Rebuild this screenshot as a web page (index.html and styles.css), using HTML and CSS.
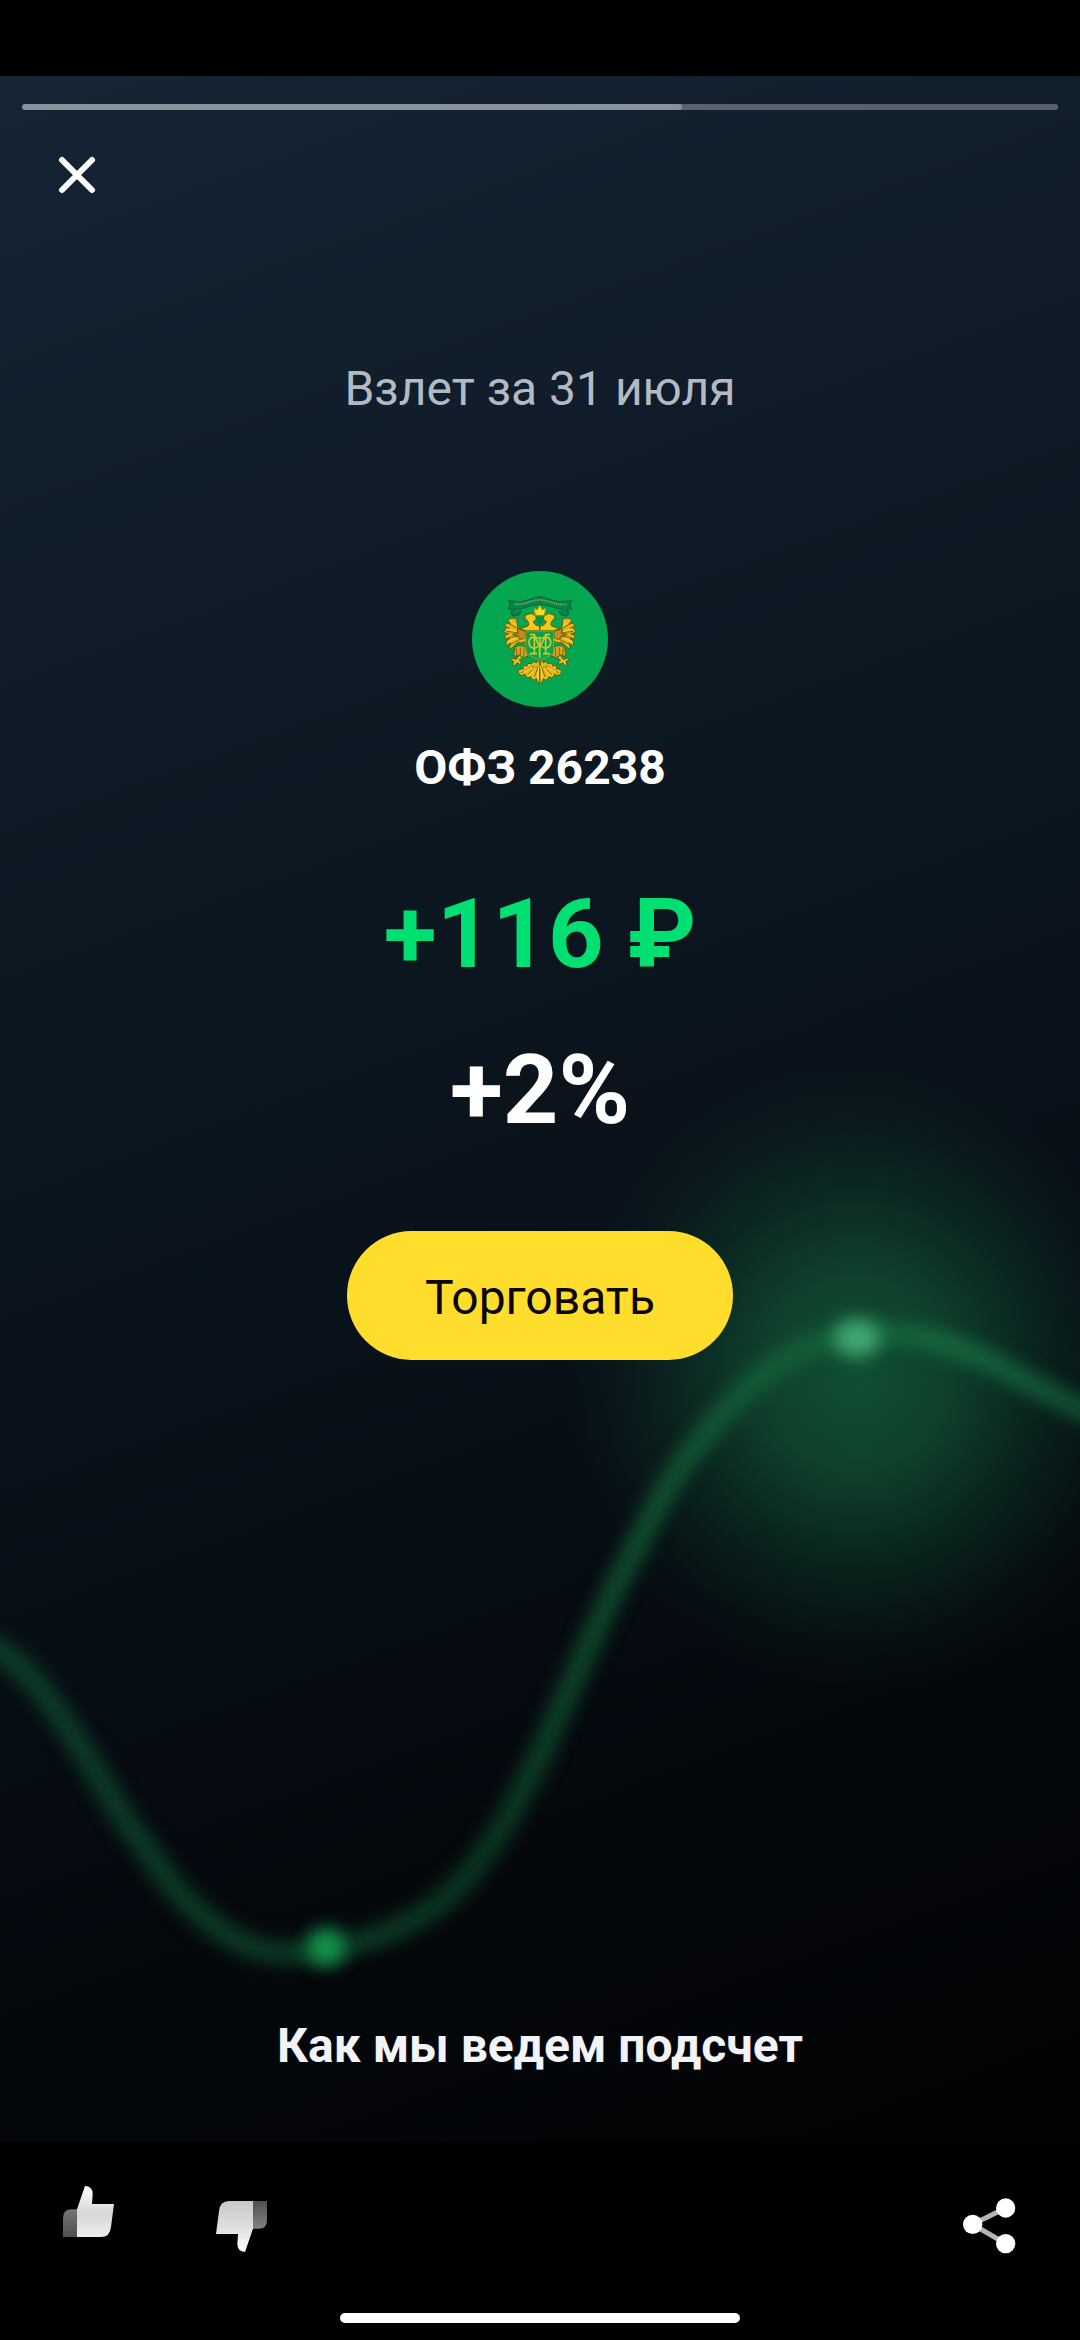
FILE: index.html
```html
<!DOCTYPE html>
<html lang="ru">
<head>
<meta charset="utf-8">
<meta name="viewport" content="width=device-width, initial-scale=1">
<title>Взлет за 31 июля</title>
<link rel="stylesheet" href="styles.css">
</head>
<body>
<main class="story">
  <svg class="backdrop" viewBox="0 0 1080 2066" preserveAspectRatio="none" aria-hidden="true">
    <defs>
      <radialGradient id="glow">
        <stop offset="0" stop-color="#188048" stop-opacity=".56"/>
        <stop offset=".3" stop-color="#188048" stop-opacity=".45"/>
        <stop offset=".6" stop-color="#188048" stop-opacity=".2"/>
        <stop offset=".85" stop-color="#188048" stop-opacity=".05"/>
        <stop offset="1" stop-color="#188048" stop-opacity="0"/>
      </radialGradient>
      <linearGradient id="line" x1="0" y1="0" x2="1080" y2="0" gradientUnits="userSpaceOnUse">
        <stop offset="0" stop-color="#0c3b26"/>
        <stop offset=".45" stop-color="#09331f"/>
        <stop offset=".7" stop-color="#135a34"/>
        <stop offset=".88" stop-color="#15643b"/>
        <stop offset="1" stop-color="#0f4c2e"/>
      </linearGradient>
      <filter id="soft" x="-10%" y="-10%" width="120%" height="120%" color-interpolation-filters="sRGB"><feGaussianBlur stdDeviation="8"/></filter>
      <filter id="dot" x="-100%" y="-100%" width="300%" height="300%" color-interpolation-filters="sRGB"><feGaussianBlur stdDeviation="9"/></filter>
    </defs>
    <ellipse cx="857" cy="1300" rx="295" ry="315" fill="url(#glow)"/>
    <path d="M-40 1555C-26 1560-14 1566 0 1575C36 1599 62 1641 89 1685C108 1716 124 1745 143 1768C161 1794 176 1817 196 1834C220 1857 250 1877 286 1877C318 1877 350 1870 375 1861C402 1852 426 1839 446 1821C468 1802 484 1780 500 1754C524 1714 542 1676 560 1634C585 1577 602 1536 627 1488C646 1451 660 1421 677 1396C704 1358 730 1326 760 1302C792 1277 823 1261 857 1260C910 1254 940 1264 977 1280C1011 1294 1046 1320 1120 1350" fill="none" stroke="url(#line)" stroke-width="24" filter="url(#soft)"/>
    <circle cx="326" cy="1871" r="19" fill="#14944b" filter="url(#dot)"/>
    <ellipse cx="857" cy="1262" rx="23" ry="19" fill="#40a771" filter="url(#dot)"/>
  </svg>

  <progress class="progress" value="637" max="1000" aria-label="Просмотр истории"></progress>
  <button class="icon-button close" type="button" aria-label="Закрыть">
    <svg viewBox="0 0 96 96"><path d="M33 33L63 63M63 33L33 63" fill="none" stroke="#fff" stroke-width="6" stroke-linecap="round"/></svg>
  </button>

  <h1 class="title">Взлет за 31 июля</h1>

  <svg class="emblem" viewBox="36 33 408 408" role="img" aria-label="Минфин России">
    <circle cx="240" cy="237" r="204" fill="#05a650"/>
    <g stroke="#5a5c10" stroke-width="3" stroke-linejoin="round">
      <g id="wing">
        <path d="M199 213C184 214 175 208 173 199L170 176C157 172 148 175 144 181L151 190C139 188 134 193 135 199L148 205C136 204 130 211 133 218L147 221C136 222 132 231 136 236L149 236C139 240 135 250 140 257L153 249C147 258 148 265 152 267L174 247C182 251 192 247 199 243Z" fill="#e5b51a"/>
        <path d="M172 205L196 214L197 231C188 240 180 240 174 230L157 223L174 221Z" fill="#c58d20"/>
        <path d="M193 167L204 163C213 158 224 163 228 171C230 178 226 183 220 184C223 194 232 198 239 198V212H196L181 206L205 197C208 190 203 181 198 178L190 178L197 173Z" fill="#f2c718"/>
        <path d="M165 266C167 257 181 253 195 261L201 273L204 289L190 293L177 285L164 290L161 280Z" fill="#d6a51d"/>
        <path d="M178 286L169 298L156 295L150 300L161 304L158 313L164 318L171 308L181 314L184 306L177 301L188 292Z" fill="#eac11d"/>
        <path d="M238 304C232 300 229 304 229 309C222 302 214 306 216 312C207 307 199 312 202 318C192 314 186 321 190 327C178 325 171 333 177 340C180 349 190 347 195 342C197 354 207 355 212 349C215 362 224 362 229 355C230 365 235 369 240 371Z" fill="#e9b91a"/>
      </g>
      <use href="#wing" transform="matrix(-1 0 0 1 479 0)"/>
    </g>
    <g fill="none" stroke="#7d6a0d" stroke-width="3" stroke-linecap="round">
      <path d="M147 191L175 207M141 214L176 219M144 233L177 228M151 253L182 237M170 268V284M181 264V284M192 267V288M184 338L222 318M204 343L229 320M224 349L235 319"/>
      <path d="M332 191L304 207M338 214L303 219M335 233L302 228M328 253L297 237M309 268V284M298 264V284M287 267V288M295 338L257 318M275 343L250 320M255 349L244 319"/>
    </g>
    <g fill="none" stroke="#ffe246" stroke-width="3" stroke-linecap="round">
      <path d="M148 182L169 195M141 206L166 214M144 245L166 235M191 336L215 323M207 347L226 324M233 356L237 318M331 182L310 195M338 206L313 214M335 245L313 235M288 336L264 323M272 347L253 324M246 356L242 318"/>
    </g>
    <path d="M144 121C162 123 181 128 199 121C218 117 228 110 239 110C250 110 262 117 281 121C298 128 317 123 336 121L329 134L335 147C312 152 290 146 271 138C252 133 227 133 208 138C188 147 167 151 145 146L151 133Z" fill="#078447" stroke="#08623b" stroke-width="3"/>
    <path d="M164 133C188 135 203 126 221 122C238 117 254 121 270 126C289 132 303 135 319 133" fill="none" stroke="#8cae4a" stroke-width="5" stroke-dasharray="4 3"/>
    <path d="M157 151C150 162 158 170 168 166C178 165 185 157 180 152M322 151C330 162 322 170 312 166C302 165 295 157 300 152" fill="#078447" stroke="#08623b" stroke-width="4"/>
    <path d="M226 166L222 145L232 150L239 135L247 150L257 145L253 166Z" fill="#ffd923" stroke="#b88b08" stroke-width="2"/>
    <path d="M230 170H249V183Q246 190 239 193Q232 190 230 183Z" fill="#078c48"/>
    <path d="M198 213H281V273C281 287 258 289 239 302C221 289 198 287 198 273Z" fill="#07a44e" stroke="#ac9b18" stroke-width="3"/>
    <g fill="none" stroke="#d5c62d" stroke-width="5">
      <path d="M210 224H223V281M270 224H257V281M209 281H231M249 281H270M223 226L239 262L257 226M239 230V293"/>
      <path d="M236 236C224 227 207 231 207 247C207 265 224 269 236 258M243 236C255 227 272 231 272 247C272 265 255 269 243 258"/>
    </g>
  </svg>

  <h2 class="name">ОФЗ 26238</h2>
  <p class="figure gain">+116 ₽</p>
  <p class="figure percent">+2%</p>
  <button class="trade" type="button">Торговать</button>
  <a class="details" href="#">Как мы ведем подсчет</a>
</main>

<footer class="footer">
  <div class="actions">
    <button class="icon-button" type="button" aria-label="Нравится">
      <svg viewBox="120 144 288 288">
        <defs>
          <linearGradient id="hand" x1="0" y1="0" x2="0" y2="1"><stop offset="0" stop-color="#fff"/><stop offset=".55" stop-color="#d6d6d6"/><stop offset="1" stop-color="#efefef"/></linearGradient>
          <linearGradient id="cuff" x1="0" y1="0" x2="0" y2="1"><stop offset="0" stop-color="#747474"/><stop offset="1" stop-color="#505050"/></linearGradient>
        </defs>
        <path d="M189 321V265Q189 238 214 238H232V321Z" fill="url(#cuff)"/>
        <path d="M231 238L255 168Q278 169 278 192L276 222H342L333 291Q330 321 303 321H231Z" fill="url(#hand)"/>
      </svg>
    </button>
    <button class="icon-button" type="button" aria-label="Не нравится">
      <svg viewBox="579 144 288 288">
        <defs>
          <linearGradient id="hand-down" x1="0" y1="0" x2="0" y2="1"><stop offset="0" stop-color="#c8c8c8"/><stop offset=".5" stop-color="#dedede"/><stop offset="1" stop-color="#fff"/></linearGradient>
          <linearGradient id="cuff-down" x1="0" y1="0" x2="0" y2="1"><stop offset="0" stop-color="#505050"/><stop offset="1" stop-color="#808080"/></linearGradient>
        </defs>
        <path d="M801 213V269Q801 296 776 296H758V213Z" fill="url(#cuff-down)"/>
        <path d="M759 296L735 366Q712 365 712 342L714 312H648L657 243Q660 213 687 213H759Z" fill="url(#hand-down)"/>
      </svg>
    </button>
    <button class="icon-button share" type="button" aria-label="Поделиться">
      <svg viewBox="672 144 288 288">
        <path d="M857 234L758 283L857 341" fill="none" stroke="#b4b4b4" stroke-width="15"/>
        <g fill="#fff"><circle cx="857" cy="234" r="29"/><circle cx="758" cy="283" r="29"/><circle cx="857" cy="341" r="29"/></g>
      </svg>
    </button>
  </div>
  <div class="home-bar"></div>
</footer>
</body>
</html>
```
FILE: styles.css
```css
* {
  box-sizing: border-box;
}

body {
  margin: 0;
  min-height: 100vh;
  padding-top: 76px;
  display: flex;
  flex-direction: column;
  background: #000;
  color: #fff;
  font-family: Roboto, "Noto Sans", sans-serif;
  font-size: 48px;
  line-height: 64px;
}

.story {
  position: relative;
  isolation: isolate;
  flex: 1;
  display: flex;
  flex-direction: column;
  align-items: center;
  padding: 28px 22px 64px;
  background: linear-gradient(160deg, #152535 0%, #101c29 22%, #0b151e 46%, #070e16 65%, #04070b 83%, #010203 100%);
}

/* Blurred chart line behind the content */
.backdrop {
  position: absolute;
  inset: 0;
  z-index: -1;
  width: 100%;
  height: 100%;
}

.progress {
  appearance: none;
  display: block;
  width: 100%;
  height: 6px;
  border: 0;
  border-radius: 3px;
  overflow: hidden;
  background: rgba(255, 255, 255, 0.3);
}

.progress::-webkit-progress-bar {
  background: transparent;
}

.progress::-webkit-progress-value {
  border-radius: 3px;
  background: #87929b;
}

.icon-button {
  width: 96px;
  height: 96px;
  padding: 0;
  border: 0;
  background: none;
}

.icon-button svg {
  display: block;
  width: 100%;
  height: 100%;
}

.close {
  align-self: flex-start;
  margin: 17px 0 0 7px;
}

.title {
  margin: 134px 0 0;
  font-size: 48px;
  font-weight: 400;
  color: #b3bac4;
}

.emblem {
  width: 136px;
  height: 136px;
  margin-top: 150px;
}

.name {
  margin: 29px 0 0;
  font-size: 48px;
  font-weight: 700;
}

.figure {
  margin: 28px 0 0;
  font-size: 97px;
  font-weight: 700;
  line-height: 128px;
}

.gain {
  margin-top: 70px;
  color: #00e072;
}

.trade {
  height: 129px;
  margin-top: 77px;
  padding: 4px 78px 0;
  border: 0;
  border-radius: 65px;
  background: #ffdd2d;
  color: #0a0500;
  font: inherit;
}

.details {
  margin-top: auto;
  color: #f1f3f7;
  font-weight: 700;
  text-decoration: none;
}

.footer {
  padding: 36px 40px 17px;
}

.actions {
  display: flex;
  gap: 57px;
}

.share {
  margin-left: auto;
}

.home-bar {
  width: 40%;
  height: 10px;
  margin: 39px auto 0;
  border-radius: 5px;
  background: #fff;
}
```
